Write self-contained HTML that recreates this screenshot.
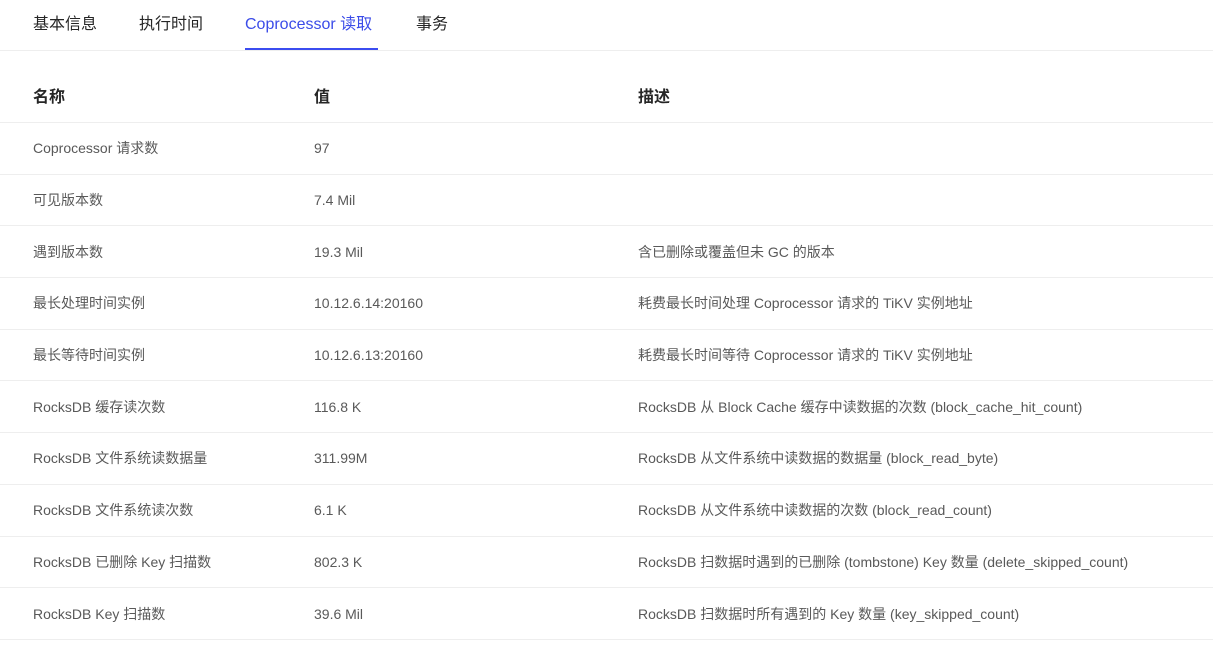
<!DOCTYPE html>
<html><head><meta charset="utf-8"><style>
body{margin:0;background:#fff;font-family:"Liberation Sans","Noto Sans CJK SC",sans-serif;width:1213px;height:657px;overflow:hidden}
.tabs{height:51px;border-bottom:1px solid #eeeeee;position:relative;box-sizing:border-box}
.tab{position:absolute;top:14px;font-size:16px;color:#262626;line-height:22px}
.tab.active{color:#3b4ce8}
.ul{position:absolute;left:245px;width:133px;top:48px;height:2px;background:#3b4cf0}
table{border-collapse:collapse;width:1213px;position:absolute;top:71px;left:0}
th{font-weight:bold;font-size:16px;color:#262626;text-align:left;height:47px;padding:0 0 4px 0;border-bottom:1px solid #eeeeee}
td{font-size:14px;color:#595959;height:51.7px;border-bottom:1px solid #eeeeee;padding:0;box-sizing:border-box}
.c1{padding-left:33px;width:281px}.c2{width:324px}
</style></head><body>
<div class="tabs">
<span class="tab" style="left:33px">基本信息</span>
<span class="tab" style="left:139px">执行时间</span>
<span class="tab active" style="left:245px">Coprocessor 读取</span>
<span class="tab" style="left:416px">事务</span>
<div class="ul"></div>
</div>
<table>
<tr><th class="c1">名称</th><th class="c2">值</th><th>描述</th></tr>
<tr><td class="c1">Coprocessor 请求数</td><td>97</td><td></td></tr>
<tr><td class="c1">可见版本数</td><td>7.4 Mil</td><td></td></tr>
<tr><td class="c1">遇到版本数</td><td>19.3 Mil</td><td>含已删除或覆盖但未 GC 的版本</td></tr>
<tr><td class="c1">最长处理时间实例</td><td>10.12.6.14:20160</td><td>耗费最长时间处理 Coprocessor 请求的 TiKV 实例地址</td></tr>
<tr><td class="c1">最长等待时间实例</td><td>10.12.6.13:20160</td><td>耗费最长时间等待 Coprocessor 请求的 TiKV 实例地址</td></tr>
<tr><td class="c1">RocksDB 缓存读次数</td><td>116.8 K</td><td>RocksDB 从 Block Cache 缓存中读数据的次数 (block_cache_hit_count)</td></tr>
<tr><td class="c1">RocksDB 文件系统读数据量</td><td>311.99M</td><td>RocksDB 从文件系统中读数据的数据量 (block_read_byte)</td></tr>
<tr><td class="c1">RocksDB 文件系统读次数</td><td>6.1 K</td><td>RocksDB 从文件系统中读数据的次数 (block_read_count)</td></tr>
<tr><td class="c1">RocksDB 已删除 Key 扫描数</td><td>802.3 K</td><td>RocksDB 扫数据时遇到的已删除 (tombstone) Key 数量 (delete_skipped_count)</td></tr>
<tr><td class="c1">RocksDB Key 扫描数</td><td>39.6 Mil</td><td>RocksDB 扫数据时所有遇到的 Key 数量 (key_skipped_count)</td></tr>
</table>
</body></html>
